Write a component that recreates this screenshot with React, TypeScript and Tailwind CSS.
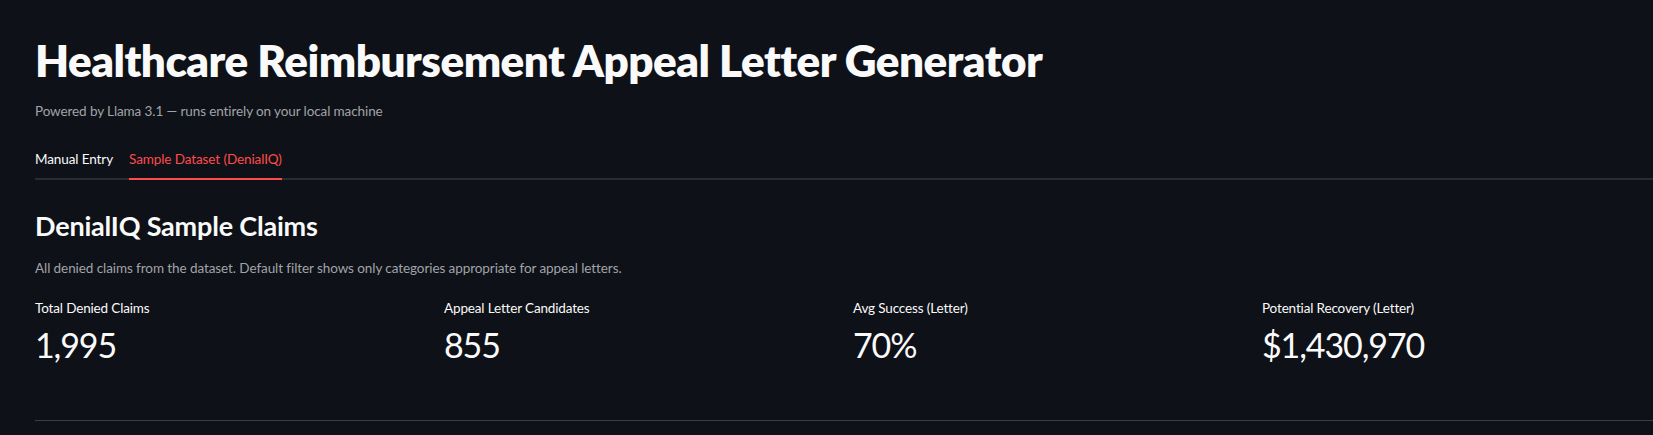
import React, { useState } from 'react';

interface Metric {
  label: string;
  value: string;
}

const metrics: Metric[] = [
  { label: 'Total Denied Claims', value: '1,995' },
  { label: 'Appeal Letter Candidates', value: '855' },
  { label: 'Avg Success (Letter)', value: '70%' },
  { label: 'Potential Recovery (Letter)', value: '$1,430,970' },
];

const tabs = ['Manual Entry', 'Sample Dataset (DenialIQ)'];

export default function App() {
  const [active, setActive] = useState(1);

  return (
    <div className="min-h-screen w-full overflow-hidden bg-[#0e1117] font-['Lato','Liberation_Sans',sans-serif] text-[#fafafa]">
      <div className="pl-[35px] pt-[34px]">
        <h1 className="text-[44px] font-extrabold leading-[1.2] tracking-[-0.5px]">
          Healthcare Reimbursement Appeal Letter Generator
        </h1>
        <p className="mt-[14px] text-[13.5px] leading-[21px] tracking-[-0.1px] text-[#a1a3a8]">
          Powered by Llama 3.1 — runs entirely on your local machine
        </p>

        {/* Tabs */}
        <div className="mt-[27px] flex gap-[16px] border-b-2 border-[#2a2c33]">
          {tabs.map((t, i) => (
            <button
              key={t}
              onClick={() => setActive(i)}
              className={`-mb-[2px] border-b-2 pb-[8px] text-[13.5px] leading-[21px] tracking-[-0.1px] ${
                active === i ? 'border-[#ff4b4b] text-[#ff4b4b]' : 'border-transparent text-[#fafafa]'
              }`}
            >
              {t}
            </button>
          ))}
        </div>

        <h3 className="mt-[29px] text-[27px] font-bold leading-[34px] tracking-[-0.2px]">DenialIQ Sample Claims</h3>
        <p className="mt-[15px] text-[13.5px] leading-[21px] tracking-[-0.08px] text-[#a1a3a8]">
          All denied claims from the dataset. Default filter shows only categories appropriate for appeal letters.
        </p>

        {/* Metrics */}
        <div className="mt-[19px] grid grid-cols-[390px_390px_390px_390px] gap-[19px]">
          {metrics.map((m) => (
            <div key={m.label}>
              <div className="text-[13.5px] leading-[21px] tracking-[-0.15px]">{m.label}</div>
              <div className="mt-[4px] text-[34px] leading-[43px] tracking-[-1.1px]">{m.value}</div>
            </div>
          ))}
        </div>

        <div className="mt-[54px] h-px bg-[#3d3e43]" />
      </div>
    </div>
  );
}
